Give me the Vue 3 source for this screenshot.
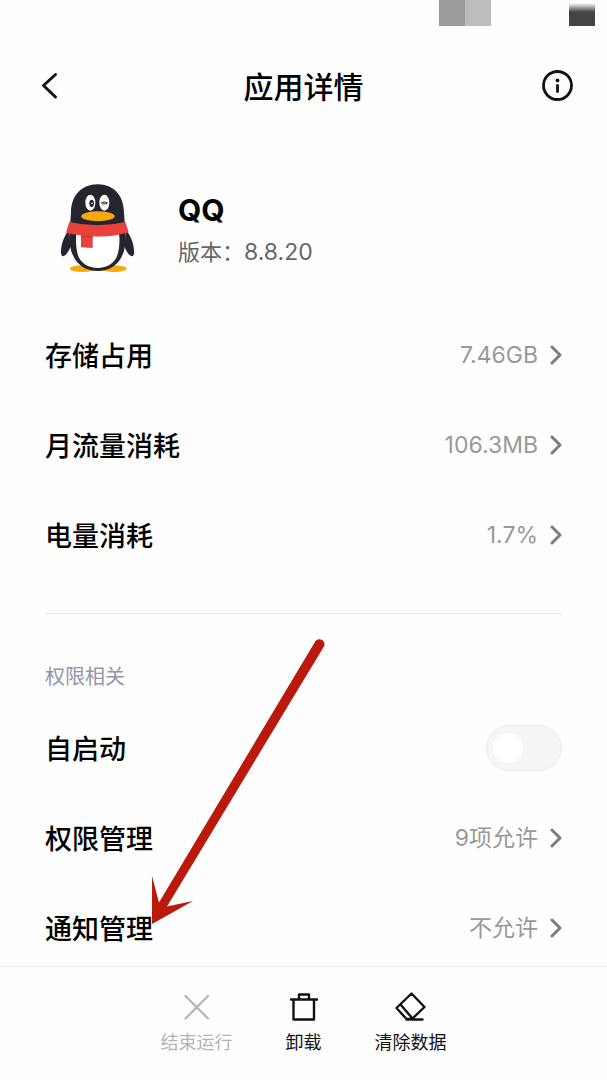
<template>
  <div class="page">
    <div class="status-bar">
      <span class="block mid"></span>
      <span class="block light"></span>
      <span class="block dark"></span>
    </div>

    <header class="header">
      <button class="icon-btn" aria-label="返回">
        <svg viewBox="0 0 32 32" width="32" height="32" fill="none" stroke="#111" stroke-width="3" stroke-linecap="round" stroke-linejoin="round">
          <polyline points="21.5 4.5 9.5 15.5 21.5 27" />
        </svg>
      </button>
      <h1 class="title">应用详情</h1>
      <button class="icon-btn" aria-label="应用信息">
        <svg viewBox="0 0 32 32" width="32" height="32" fill="none" stroke="#111" stroke-width="2.8">
          <circle cx="16.5" cy="15.5" r="14" />
          <circle cx="16.5" cy="10.4" r="1.9" fill="#111" stroke="none" />
          <line x1="16.5" y1="15.5" x2="16.5" y2="21.5" stroke-linecap="round" />
        </svg>
      </button>
    </header>

    <main class="content">
      <section class="app-info">
        <svg class="app-icon" viewBox="-15 12 312 312" width="104" height="104">
          <ellipse cx="98" cy="281" rx="38" ry="10" fill="#f5a90c" />
          <ellipse cx="192" cy="281" rx="38" ry="10" fill="#f5a90c" />
          <path d="M56 166C42 184 32 210 33 234C34 248 43 245 50 236C56 228 60 220 62 212Z" fill="#25242f" />
          <path d="M229 166C243 184 253 210 252 234C251 248 242 245 235 236C229 228 225 220 223 212Z" fill="#25242f" />
          <path d="M143 28C94 28 64 62 63 112L58 180C56 245 88 288 143 288C198 288 230 245 227 180L222 112C221 62 192 28 143 28Z" fill="#25242f" />
          <path d="M79 176L207 176C210 195 208 220 203 238C195 265 171 279 143 279C115 279 91 265 83 238C78 220 77 195 79 176Z" fill="#fff" />
          <ellipse cx="121" cy="83" rx="15" ry="24" fill="#fff" />
          <ellipse cx="163" cy="83" rx="15" ry="24" fill="#fff" />
          <ellipse cx="125" cy="85" rx="7" ry="11" fill="#25242f" />
          <circle cx="126" cy="85" r="2.5" fill="#fff" />
          <path d="M154 84Q163 77 172 83M158 87Q165 85 170 86" fill="none" stroke="#25242f" stroke-width="3" stroke-linecap="round" />
          <ellipse cx="144" cy="124" rx="50" ry="15" fill="#f5a90c" />
          <path d="M58 141Q143 160 226 141L236 172Q185 188 128 184L128 219L93 217L93 181Q68 178 48 173Z" fill="#e9413c" />
          <path d="M94 181L128 184L128 188L94 186Z" fill="#d5332f" />
        </svg>
        <div class="app-text">
          <h2 class="app-name">QQ</h2>
          <p class="app-version">版本：<span class="version-num">8.8.20</span></p>
        </div>
      </section>

      <section class="list">
        <button class="row" v-for="item in usageList" :key="item.label">
          <span class="row-label">{{ item.label }}</span>
          <span class="row-value">{{ item.value }}</span>
          <svg class="chevron" viewBox="0 0 12 20" width="12" height="20">
            <polyline points="2 2 10 10 2 18" />
          </svg>
        </button>
      </section>

      <hr class="divider" />

      <section class="list">
        <h3 class="section-title">权限相关</h3>
        <div class="row">
          <label class="row-label" for="auto-start">自启动</label>
          <input id="auto-start" class="switch" type="checkbox" v-model="autoStart" />
        </div>
        <button class="row" v-for="item in permissionList" :key="item.label">
          <span class="row-label">{{ item.label }}</span>
          <span class="row-value">{{ item.value }}</span>
          <svg class="chevron" viewBox="0 0 12 20" width="12" height="20">
            <polyline points="2 2 10 10 2 18" />
          </svg>
        </button>

        <!-- 指向「通知管理」的箭头 -->
        <svg class="pointer" viewBox="0 0 180 290" width="180" height="290">
          <path d="M165.4 7.3A5 5 0 0 1 173.8 12.7L17 272.5L43 267L2 290L2 242L9 268.5Z" fill="#ba190b" />
        </svg>
      </section>
    </main>

    <footer class="toolbar">
      <button class="tool" disabled>
        <svg viewBox="0 0 32 32" width="32" height="32" fill="none" stroke="currentColor" stroke-width="2.2" stroke-linecap="round">
          <path d="M4.5 5L27 27.5M27 5L4.5 27.5" />
        </svg>
        <span>结束运行</span>
      </button>
      <button class="tool">
        <svg viewBox="0 0 32 32" width="32" height="32" fill="none" stroke="currentColor" stroke-width="2.4" stroke-linejoin="round" stroke-linecap="round">
          <path d="M3 8.5H29M5.5 8.5V28.5H26V8.5M11 8V3.5H21V8" />
        </svg>
        <span>卸载</span>
      </button>
      <button class="tool">
        <svg viewBox="0 0 32 32" width="32" height="32" fill="none" stroke="currentColor" stroke-width="2.4" stroke-linejoin="round" stroke-linecap="round">
          <path d="M16.5 2.5L29.5 16L17 28H11.5L1.5 17ZM5.5 13.5L17.5 27.5M11.5 28.5H27.5" />
        </svg>
        <span>清除数据</span>
      </button>
    </footer>
  </div>
</template>

<script setup>
import { ref } from 'vue'

const autoStart = ref(false)

const usageList = [
  { label: '存储占用', value: '7.46GB' },
  { label: '月流量消耗', value: '106.3MB' },
  { label: '电量消耗', value: '1.7%' },
]

const permissionList = [
  { label: '权限管理', value: '9项允许' },
  { label: '通知管理', value: '不允许' },
]
</script>

<style>
body {
  margin: 0;
  background: #fefefe;
}
</style>

<style scoped>
.page {
  display: flex;
  flex-direction: column;
  height: 100vh;
  background: #fefefe;
  color: #000;
  font-family: "Noto Sans CJK SC", "Noto Sans", sans-serif;
}

button {
  padding: 0;
  border: none;
  background: none;
  color: inherit;
  font-family: inherit;
  cursor: pointer;
}

h1,
h2,
h3,
p {
  margin: 0;
}

.status-bar {
  display: flex;
  justify-content: flex-end;
  height: 26px;
  padding-right: 12px;
  flex-shrink: 0;
}

.block {
  width: 26px;
}

.block.mid {
  background: #9b9b9b;
}

.block.light {
  background: #bdbdbd;
}

.block.dark {
  margin-left: 78px;
  background: linear-gradient(#fefefe 3px, #444 12px);
}

.header {
  display: flex;
  align-items: center;
  justify-content: space-between;
  height: 120px;
  padding: 0 34px;
  flex-shrink: 0;
}

.icon-btn {
  display: flex;
}

.title {
  padding-bottom: 2px;
  font-size: 30px;
  line-height: 40px;
  font-weight: 500;
}

.content {
  flex: 1;
  min-height: 0;
  padding: 0 45px;
  overflow-y: auto;
  scrollbar-width: none;
}

.app-info {
  display: flex;
  align-items: center;
  gap: 29px;
  height: 158px;
  padding-top: 6px;
}

.app-icon {
  flex-shrink: 0;
}

.app-name {
  font-family: Inter, "Noto Sans CJK SC", sans-serif;
  font-size: 30px;
  line-height: 40px;
  font-weight: 700;
}

.app-version {
  font-size: 22px;
  line-height: 40px;
  color: #666;
}

.version-num {
  font-family: Inter, "Noto Sans CJK SC", sans-serif;
  font-size: 23px;
}

.list {
  position: relative;
}

.row {
  display: flex;
  align-items: center;
  width: 100%;
  height: 90px;
}

.row-label {
  flex: 1;
  font-size: 27px;
  line-height: 40px;
  font-weight: 500;
  text-align: left;
}

.row-value {
  font-family: Inter, "Noto Sans CJK SC", sans-serif;
  font-size: 23px;
  line-height: 40px;
  color: #999;
}

.chevron {
  margin-left: 12px;
  fill: none;
  stroke: #7c7c7c;
  stroke-width: 3;
  stroke-linecap: round;
  stroke-linejoin: round;
}

.divider {
  height: 1px;
  margin: 33px 0 0;
  border: none;
  background: #e4e4e4;
}

.section-title {
  padding: 47px 0 12px;
  font-size: 20px;
  line-height: 30px;
  font-weight: 400;
  color: #9494aa;
}

.switch {
  appearance: none;
  display: flex;
  align-items: center;
  box-sizing: border-box;
  width: 76px;
  height: 46px;
  margin: 0;
  padding: 0 6px;
  border: 1px solid #ececec;
  border-radius: 23px;
  background: #f5f5f5;
  cursor: pointer;
}

.switch::before {
  content: "";
  width: 30px;
  height: 30px;
  border-radius: 50%;
  background: #fff;
}

.switch:checked {
  justify-content: flex-end;
  background: #0d84ff;
}

.pointer {
  position: absolute;
  left: 105px;
  bottom: 49px;
  pointer-events: none;
}

.toolbar {
  display: flex;
  justify-content: center;
  height: 113px;
  border-top: 1px solid #ebebeb;
  flex-shrink: 0;
}

.tool {
  display: flex;
  flex-direction: column;
  align-items: center;
  gap: 5px;
  width: 107px;
  padding-top: 24px;
  font-size: 18px;
  line-height: 26px;
  color: #111;
}

.tool:disabled {
  color: #b4b4b4;
}
</style>
